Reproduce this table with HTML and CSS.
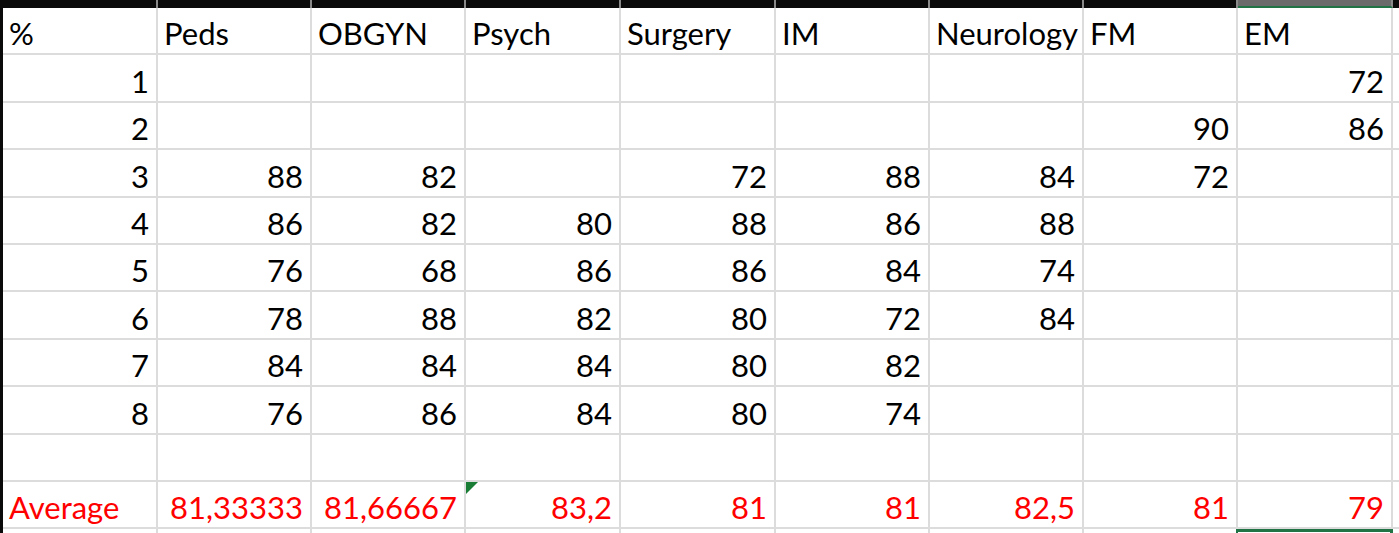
FILE: index.html
```html
<!DOCTYPE html>
<html>
<head>
<meta charset="utf-8">
<link rel="stylesheet" href="styles.css">
</head>
<body>
<div class="sheet">
  <div class="edge"></div>
  <div class="hd"></div><div class="hd"></div><div class="hd"></div><div class="hd"></div><div class="hd"></div><div class="hd"></div><div class="hd"></div><div class="hd"></div><div class="hd sel"></div><div class="hd last"></div>

  <div class="c t">%</div><div class="c t">Peds</div><div class="c t">OBGYN</div><div class="c t">Psych</div><div class="c t">Surgery</div><div class="c t">IM</div><div class="c t">Neurology</div><div class="c t">FM</div><div class="c t">EM</div><div class="c"></div>

  <div class="c">1</div><div class="c"></div><div class="c"></div><div class="c"></div><div class="c"></div><div class="c"></div><div class="c"></div><div class="c"></div><div class="c">72</div><div class="c"></div>

  <div class="c">2</div><div class="c"></div><div class="c"></div><div class="c"></div><div class="c"></div><div class="c"></div><div class="c"></div><div class="c">90</div><div class="c">86</div><div class="c"></div>

  <div class="c">3</div><div class="c">88</div><div class="c">82</div><div class="c"></div><div class="c">72</div><div class="c">88</div><div class="c">84</div><div class="c">72</div><div class="c"></div><div class="c"></div>

  <div class="c">4</div><div class="c">86</div><div class="c">82</div><div class="c">80</div><div class="c">88</div><div class="c">86</div><div class="c">88</div><div class="c"></div><div class="c"></div><div class="c"></div>

  <div class="c">5</div><div class="c">76</div><div class="c">68</div><div class="c">86</div><div class="c">86</div><div class="c">84</div><div class="c">74</div><div class="c"></div><div class="c"></div><div class="c"></div>

  <div class="c">6</div><div class="c">78</div><div class="c">88</div><div class="c">82</div><div class="c">80</div><div class="c">72</div><div class="c">84</div><div class="c"></div><div class="c"></div><div class="c"></div>

  <div class="c">7</div><div class="c">84</div><div class="c">84</div><div class="c">84</div><div class="c">80</div><div class="c">82</div><div class="c"></div><div class="c"></div><div class="c"></div><div class="c"></div>

  <div class="c">8</div><div class="c">76</div><div class="c">86</div><div class="c">84</div><div class="c">80</div><div class="c">74</div><div class="c"></div><div class="c"></div><div class="c"></div><div class="c"></div>

  <div class="c"></div><div class="c"></div><div class="c"></div><div class="c"></div><div class="c"></div><div class="c"></div><div class="c"></div><div class="c"></div><div class="c"></div><div class="c"></div>

  <div class="c t red">Average</div><div class="c red">81,33333</div><div class="c red">81,66667</div><div class="c red warn">83,2</div><div class="c red">81</div><div class="c red">81</div><div class="c red">82,5</div><div class="c red">81</div><div class="c red">79</div><div class="c"></div>

  <div class="p"></div><div class="p"></div><div class="p"></div><div class="p"></div><div class="p"></div><div class="p"></div><div class="p"></div><div class="p"></div><div class="p active"></div><div class="p"></div>
</div>
</body>
</html>
```

FILE: styles.css
```css
html, body {
  margin: 0;
  padding: 0;
  background: #ffffff;
}

.sheet {
  display: grid;
  grid-template-columns: 3px 155px 154px 154px 155px 155px 154px 154px 154px 155px 1fr;
  grid-template-rows: 8px repeat(11, 47.4px) 1fr;
  width: 1399px;
  height: 533px;
  overflow: hidden;
  font-family: Lato, "Open Sans", sans-serif;
  font-size: 31px;
  color: #000000;
}

.edge {
  grid-row: 1 / -1;
  grid-column: 1;
  background: #0a0a0a;
}

.hd {
  background: #0a0a0a;
  border-right: 2px solid #8a8a8a;
  box-sizing: border-box;
}

.hd.sel {
  background: #6b6b6b;
  border-bottom: 2px solid #217346;
}

.hd.last {
  border-right: none;
}

.c {
  position: relative;
  box-sizing: border-box;
  border-right: 2px solid #dcdcdc;
  border-bottom: 2px solid #dcdcdc;
  display: flex;
  align-items: flex-end;
  justify-content: flex-end;
  padding: 0 7px 5px 6px;
  line-height: 30px;
  white-space: nowrap;
  overflow: visible;
}

.c.t {
  justify-content: flex-start;
  padding-left: 6px;
}

.red {
  color: #ff0000;
}

.warn::before {
  content: "";
  position: absolute;
  left: 0;
  top: 0;
  width: 0;
  height: 0;
  border-top: 12px solid #1a7d36;
  border-right: 12px solid transparent;
}

.p {
  box-sizing: border-box;
  border-right: 2px solid #dcdcdc;
}

.p.active {
  border-top: 3px solid #217346;
  border-left: 2px solid #217346;
  border-right: 3px solid #217346;
  margin-left: -2px;
}
```
